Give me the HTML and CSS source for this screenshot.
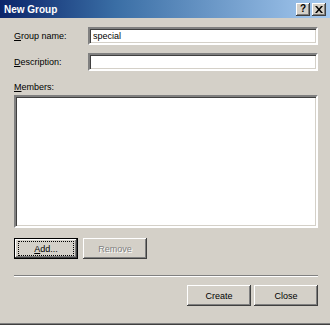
FILE: index.html
```html
<!DOCTYPE html>
<html lang="en">
<head>
    <meta charset="UTF-8">
    <meta name="viewport" content="width=device-width, initial-scale=1.0">
    <title>New Group</title>
    <link rel="stylesheet" href="styles.css">
</head>
<body>
    <div class="window">
        <div class="titlebar">
            <span class="title">New Group</span>
            <div class="title-buttons">
                <span class="tbtn help">?</span>
                <span class="tbtn close">
                    <svg width="8" height="7" viewBox="0 0 8 7">
                        <path d="M0 0h2l2 2.5L6 0h2L5 3.5L8 7H6L4 4.5L2 7H0l3-3.5z" fill="#000"/>
                    </svg>
                </span>
            </div>
        </div>
        <div class="content">
            <div class="form-grid">
                <label for="groupName"><u>G</u>roup name:</label>
                <input type="text" id="groupName" class="field" value="special">
                <label for="description"><u>D</u>escription:</label>
                <input type="text" id="description" class="field">
            </div>
            <div class="members-label"><u>M</u>embers:</div>
            <div class="members-list"></div>
            <div class="member-buttons">
                <button class="btn default"><span class="focus"><u>A</u>dd...</span></button>
                <button class="btn" disabled>Remove</button>
            </div>
            <div class="separator"></div>
            <div class="dialog-buttons">
                <button class="btn">Create</button>
                <button class="btn">Close</button>
            </div>
        </div>
    </div>
</body>
</html>
```

FILE: styles.css
```css
body {
    margin: 0;
    font-family: "Liberation Sans", Arial, sans-serif;
    font-size: 9px;
    color: #000;
}
.window {
    width: 330px;
    height: 325px;
    box-sizing: border-box;
    background-color: #d4d0c8;
    border-bottom: 1px solid #404040;
    box-shadow: inset 0 -1px #808080;
}
.titlebar {
    height: 18px;
    display: flex;
    align-items: center;
    justify-content: space-between;
    padding: 0 4px 0 4px;
    background: linear-gradient(to right, #0a246a 0%, #3a6ea5 35%, #a6caf0 100%);
}
.title {
    color: #fff;
    font-weight: bold;
    font-size: 10px;
}
.title-buttons {
    display: flex;
    gap: 2px;
}
.tbtn {
    width: 14px;
    height: 13px;
    box-sizing: border-box;
    display: flex;
    align-items: center;
    justify-content: center;
    background-color: #d4d0c8;
    box-shadow: inset -1px -1px #404040, inset 1px 1px #fff, inset -2px -2px #808080;
    font-weight: bold;
    font-size: 10px;
    line-height: 1;
}
.content {
    padding: 9px 12px 0 14px;
}
.form-grid {
    display: grid;
    grid-template-columns: 74px 1fr;
    row-gap: 8px;
    align-items: center;
}
.field {
    height: 18px;
    box-sizing: border-box;
    margin: 0;
    padding: 0 3px;
    border: 2px solid;
    border-color: #808080 #fff #fff #808080;
    box-shadow: inset 1px 1px #404040, inset -1px -1px #d4d0c8;
    background-color: #fff;
    font-family: inherit;
    font-size: 9px;
    outline: none;
}
.members-label {
    margin-top: 10px;
    line-height: 12px;
}
.members-list {
    margin-top: 2px;
    height: 133px;
    box-sizing: border-box;
    border: 2px solid;
    border-color: #808080 #fff #fff #808080;
    box-shadow: inset 1px 1px #404040, inset -1px -1px #d4d0c8;
    background-color: #fff;
}
.member-buttons {
    display: flex;
    gap: 5px;
    margin-top: 10px;
}
.btn {
    width: 64px;
    height: 21px;
    margin: 0;
    padding: 0;
    border: none;
    background-color: #d4d0c8;
    box-shadow: inset -1px -1px #404040, inset 1px 1px #fff, inset -2px -2px #808080;
    font-family: inherit;
    font-size: 9px;
    color: #000;
}
.btn:disabled {
    color: #808080;
    text-shadow: 1px 1px #fff;
}
.btn.default {
    border: 1px solid #000;
    box-shadow: inset -1px -1px #404040, inset 1px 1px #fff, inset -2px -2px #808080;
    display: flex;
    align-items: center;
    justify-content: center;
}
.focus {
    display: flex;
    align-items: center;
    justify-content: center;
    width: 54px;
    height: 13px;
    border: 1px dotted #000;
}
.separator {
    margin-top: 16px;
    height: 1px;
    border-top: 1px solid #808080;
    border-bottom: 1px solid #fff;
    height: 0;
}
.dialog-buttons {
    display: flex;
    justify-content: flex-end;
    gap: 3px;
    margin-top: 8px;
}
```
